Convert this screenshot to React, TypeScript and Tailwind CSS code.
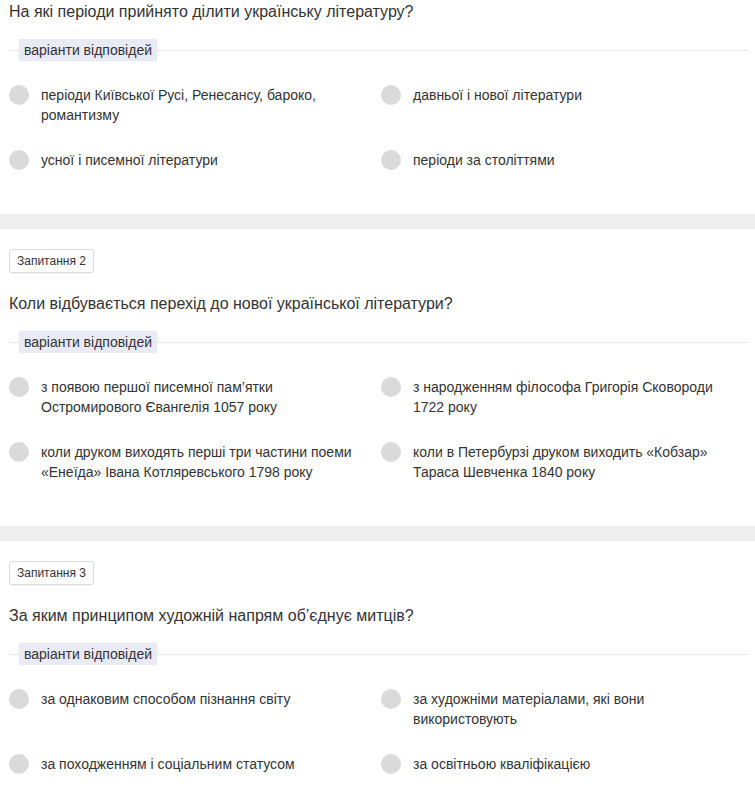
import React from 'react'

type Question = {
  num?: number
  title: string
  options: string[]
}

const questions: Question[] = [
  {
    title: 'На які періоди прийнято ділити українську літературу?',
    options: [
      'періоди Київської Русі, Ренесансу, бароко, романтизму',
      'давньої і нової літератури',
      'усної і писемної літератури',
      'періоди за століттями',
    ],
  },
  {
    num: 2,
    title: 'Коли відбувається перехід до нової української літератури?',
    options: [
      'з появою першої писемної пам’ятки Остромирового Євангелія 1057 року',
      'з народженням філософа Григорія Сковороди 1722 року',
      'коли друком виходять перші три частини поеми «Енеїда» Івана Котляревського 1798 року',
      'коли в Петербурзі друком виходить «Кобзар» Тараса Шевченка 1840 року',
    ],
  },
  {
    num: 3,
    title: 'За яким принципом художній напрям об’єднує митців?',
    options: [
      'за однаковим способом пізнання світу',
      'за художніми матеріалами, які вони використовують',
      'за походженням і соціальним статусом',
      'за освітньою кваліфікацією',
    ],
  },
]

const Option: React.FC<{ text: string }> = ({ text }) => (
  <div className="flex items-start gap-[12px] pr-[12px]">
    <span className="h-[20px] w-[20px] shrink-0 rounded-full bg-[#dadada]" />
    <span className="text-[14px] leading-[20px] text-[#333]">{text}</span>
  </div>
)

const QuestionBlock: React.FC<{ q: Question }> = ({ q }) => (
  <section className={`pl-[9px] pr-[6px] pb-[44px] ${q.num ? 'pt-[20px]' : ''}`}>
    {q.num && (
      <div className="mb-[19px] flex h-[24px] w-fit items-center rounded-[3px] border border-[#dcdcdc] px-[7px] text-[12px] text-[#333] shadow-[0_1px_1px_rgba(0,0,0,0.04)]">
        Запитання {q.num}
      </div>
    )}
    <h2 className="text-[16px] leading-[24px] font-normal text-[#333]">{q.title}</h2>

    {/* legend with divider */}
    <div className="mt-[15px] flex items-center">
      <div className="h-px w-[10px] bg-[#e6e6ee]" />
      <div className="h-[22px] bg-[#e8eaf6] px-[5px] text-[14px] leading-[22px] text-[#333]">
        варіанти відповідей
      </div>
      <div className="h-px flex-1 bg-[#e6e6ee]" />
    </div>

    <div className="mt-[24px] grid grid-cols-[372px_1fr] gap-y-[25px]">
      {q.options.map((o) => (
        <Option key={o} text={o} />
      ))}
    </div>
  </section>
)

export default function App() {
  return (
    <div className="min-h-[802px] w-[755px] bg-white font-['Liberation_Sans',Arial,sans-serif]">
      {questions.map((q, i) => (
        <React.Fragment key={q.title}>
          {i > 0 && <div className="h-[15px] bg-[#eeeeee]" />}
          <QuestionBlock q={q} />
        </React.Fragment>
      ))}
    </div>
  )
}
